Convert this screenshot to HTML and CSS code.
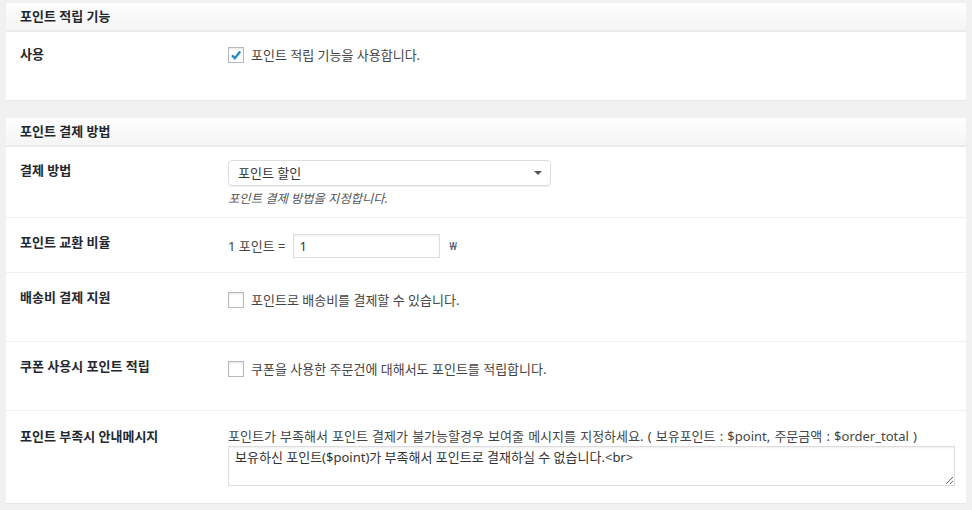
FILE: index.html
```html
<!DOCTYPE html>
<html lang="ko">
<head>
    <meta charset="UTF-8">
    <title>포인트 설정</title>
    <link rel="stylesheet" href="styles.css">
</head>
<body>
<div class="panel">
    <h3 class="panel__title">포인트 적립 기능</h3>
    <div class="panel__body">
        <div class="field field--use">
            <div class="field__label">사용</div>
            <div class="field__value">
                <label class="check">
                    <span class="check__box">
                        <svg viewBox="0 0 16 16" width="16" height="16"><path d="M3.4 7.8 L6.6 11.2 L12.8 3.4" fill="none" stroke="#1e8cbe" stroke-width="2.6"/></svg>
                    </span>
                    포인트 적립 기능을 사용합니다.
                </label>
            </div>
        </div>
    </div>
</div>

<div class="panel">
    <h3 class="panel__title">포인트 결제 방법</h3>
    <div class="panel__body">
        <div class="field field--method">
            <div class="field__label">결제 방법</div>
            <div class="field__value">
                <div class="select">
                    <span>포인트 할인</span>
                    <span class="select__arrow"></span>
                </div>
                <p class="field__desc">포인트 결제 방법을 지정합니다.</p>
            </div>
        </div>
        <div class="field field--rate">
            <div class="field__label">포인트 교환 비율</div>
            <div class="field__value field__value--inline">
                1 포인트 =
                <input type="text" class="text-input" value="1">
                <span class="currency">₩</span>
            </div>
        </div>
        <div class="field field--check">
            <div class="field__label">배송비 결제 지원</div>
            <div class="field__value">
                <label class="check">
                    <span class="check__box"></span>
                    포인트로 배송비를 결제할 수 있습니다.
                </label>
            </div>
        </div>
        <div class="field field--check">
            <div class="field__label">쿠폰 사용시 포인트 적립</div>
            <div class="field__value">
                <label class="check">
                    <span class="check__box"></span>
                    쿠폰을 사용한 주문건에 대해서도 포인트를 적립합니다.
                </label>
            </div>
        </div>
        <div class="field field--message">
            <div class="field__label">포인트 부족시 안내메시지</div>
            <div class="field__value">
                <p class="field__note">포인트가 부족해서 포인트 결제가 불가능할경우 보여줄 메시지를 지정하세요. ( 보유포인트 : $point, 주문금액 : $order_total )</p>
                <textarea class="textarea">보유하신 포인트($point)가 부족해서 포인트로 결재하실 수 없습니다.&lt;br&gt;</textarea>
            </div>
        </div>
    </div>
</div>
</body>
</html>
```

FILE: styles.css
```css
body {
    margin: 3px 6px;
    background: #f1f1f1;
    font-family: "Noto Sans", "Noto Sans CJK KR", sans-serif;
    font-size: 13px;
    color: #444;
}
.panel {
    background: #fff;
    margin-bottom: 18px;
    box-shadow: 0 1px 1px rgba(0,0,0,.04);
}
.panel__title {
    margin: 0;
    height: 27px;
    line-height: 27px;
    padding: 0 14px;
    font-size: 13px;
    font-weight: bold;
    color: #23282d;
    background: linear-gradient(to bottom, #fefefe, #f5f5f5);
    border-bottom: 2px solid #ececec;
}
.field {
    display: flex;
    box-sizing: border-box;
    padding: 15px 14px 0;
    border-bottom: 1px solid #f0f0f0;
}
.field__label {
    width: 208px;
    flex-shrink: 0;
    font-weight: bold;
    color: #23282d;
    line-height: 18px;
}
.field__value {
    flex: 1;
    line-height: 18px;
}
.field--use {
    height: 68px;
    padding-top: 13px;
    border-bottom: none;
}
.field--method {
    height: 71px;
    padding-top: 13px;
}
.field--method .field__label {
    padding-top: 1px;
}
.field--rate {
    height: 55px;
}
.field__value--inline {
    display: flex;
    align-items: center;
    margin-top: 1px;
    height: 24px;
}
.field--check {
    height: 69px;
}
.field--message {
    height: 92px;
    padding-top: 16px;
    border-bottom: none;
}
.check {
    display: flex;
    align-items: center;
    gap: 7px;
    color: #444;
    margin-top: 3px;
}
.field--use .check {
    margin-top: 1px;
}
.check__box {
    width: 14px;
    height: 14px;
    border: 1px solid #b4b9be;
    background: #fff;
    box-shadow: inset 0 1px 2px rgba(0,0,0,.1);
    display: inline-flex;
    align-items: center;
    justify-content: center;
}
.check__box svg {
    width: 15px;
    height: 15px;
}
.select {
    width: 304px;
    height: 24px;
    border: 1px solid #ddd;
    border-radius: 4px;
    box-shadow: 0 1px 1px rgba(0,0,0,.07);
    display: flex;
    align-items: center;
    justify-content: space-between;
    padding: 0 8px 0 9px;
    color: #333;
}
.select__arrow {
    width: 0;
    height: 0;
    border-left: 4px solid transparent;
    border-right: 4px solid transparent;
    border-top: 4px solid #555;
}
.field__desc {
    margin: 4px 0 0;
    font-style: italic;
    color: #555;
    font-size: 12.3px;
}
.text-input {
    box-sizing: border-box;
    width: 147px;
    height: 24px;
    margin: 0 7px 0 7px;
    padding: 1px 6px;
    border: 1px solid #ddd;
    box-shadow: inset 0 1px 2px rgba(0,0,0,.07);
    font-family: inherit;
    font-size: 13px;
    color: #333;
}
.currency {
    margin-left: 3px;
    font-size: 11px;
}
.field__note {
    margin: 0;
    word-spacing: 0.8px;
}
.textarea {
    display: block;
    box-sizing: border-box;
    width: 727px;
    height: 40px;
    margin-top: 1px;
    padding: 1px 6px;
    border: 1px solid #ddd;
    box-shadow: inset 0 1px 2px rgba(0,0,0,.07);
    font-family: inherit;
    font-size: 13px;
    color: #333;
    line-height: 18px;
}
```
